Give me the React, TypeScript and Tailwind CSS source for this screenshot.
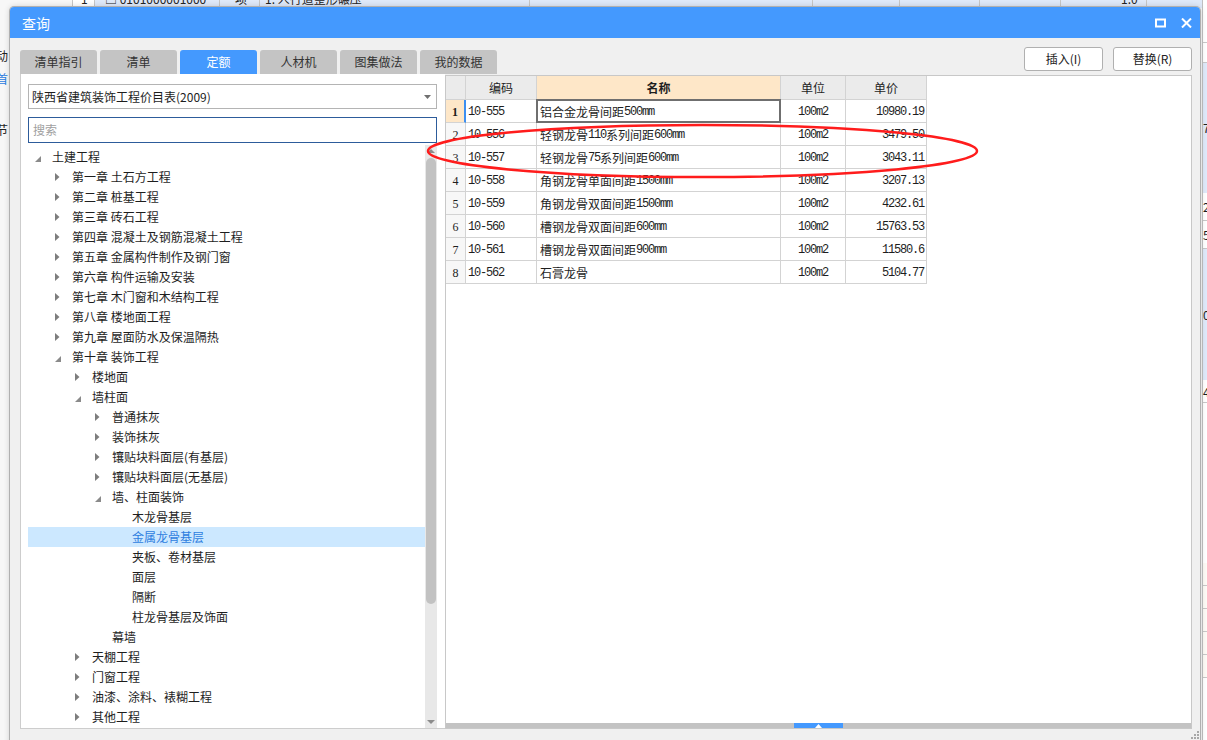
import React from "react";

type TNode = { t: string; l: number; s: "o" | "c" | "x"; sel?: boolean };

const tree: TNode[] = [
  { t: "土建工程", l: 0, s: "o" },
  { t: "第一章 土石方工程", l: 1, s: "c" },
  { t: "第二章 桩基工程", l: 1, s: "c" },
  { t: "第三章 砖石工程", l: 1, s: "c" },
  { t: "第四章 混凝土及钢筋混凝土工程", l: 1, s: "c" },
  { t: "第五章 金属构件制作及钢门窗", l: 1, s: "c" },
  { t: "第六章 构件运输及安装", l: 1, s: "c" },
  { t: "第七章 木门窗和木结构工程", l: 1, s: "c" },
  { t: "第八章 楼地面工程", l: 1, s: "c" },
  { t: "第九章 屋面防水及保温隔热", l: 1, s: "c" },
  { t: "第十章 装饰工程", l: 1, s: "o" },
  { t: "楼地面", l: 2, s: "c" },
  { t: "墙柱面", l: 2, s: "o" },
  { t: "普通抹灰", l: 3, s: "c" },
  { t: "装饰抹灰", l: 3, s: "c" },
  { t: "镶贴块料面层(有基层)", l: 3, s: "c" },
  { t: "镶贴块料面层(无基层)", l: 3, s: "c" },
  { t: "墙、柱面装饰", l: 3, s: "o" },
  { t: "木龙骨基层", l: 4, s: "x" },
  { t: "金属龙骨基层", l: 4, s: "x", sel: true },
  { t: "夹板、卷材基层", l: 4, s: "x" },
  { t: "面层", l: 4, s: "x" },
  { t: "隔断", l: 4, s: "x" },
  { t: "柱龙骨基层及饰面", l: 4, s: "x" },
  { t: "幕墙", l: 3, s: "x" },
  { t: "天棚工程", l: 2, s: "c" },
  { t: "门窗工程", l: 2, s: "c" },
  { t: "油漆、涂料、裱糊工程", l: 2, s: "c" },
  { t: "其他工程", l: 2, s: "c" },
];

const PL = ["pl-[8px]", "pl-[28px]", "pl-[48px]", "pl-[68px]", "pl-[88px]"];

const rows: string[][] = [
  ["1", "10-555", "铝合金龙骨间距500mm", "100m2", "10980.19"],
  ["2", "10-556", "轻钢龙骨110系列间距600mm", "100m2", "3479.50"],
  ["3", "10-557", "轻钢龙骨75系列间距600mm", "100m2", "3043.11"],
  ["4", "10-558", "角钢龙骨单面间距1500mm", "100m2", "3207.13"],
  ["5", "10-559", "角钢龙骨双面间距1500mm", "100m2", "4232.61"],
  ["6", "10-560", "槽钢龙骨双面间距600mm", "100m2", "15763.53"],
  ["7", "10-561", "槽钢龙骨双面间距900mm", "100m2", "11580.6"],
  ["8", "10-562", "石膏龙骨", "100m2", "5104.77"],
];

function Mixed({ s }: { s: string }) {
  const parts = s.match(/[\x00-\x7f]+|[^\x00-\x7f]+/g) || [];
  return (
    <>
      {parts.map((p, i) =>
        /^[\x00-\x7f]+$/.test(p) ? (
          <span key={i} className="font-['Liberation_Mono',monospace] tracking-[-1.2px]">
            {p}
          </span>
        ) : (
          <span key={i}>{p}</span>
        )
      )}
    </>
  );
}

function Background() {
  const topCells: { w: string; bg: string; txt?: string; pad?: string }[] = [
    { w: "w-[73px]", bg: "bg-[#f7f7f7]" },
    { w: "w-[22px]", bg: "bg-white", txt: "1", pad: "pl-[8px]" },
    { w: "w-[125px]", bg: "bg-[#dfe9f9]", txt: "□ 0101000001000", pad: "pl-[10px]" },
    { w: "w-[40px]", bg: "bg-[#dfe9f9]", txt: "项", pad: "pl-[15px]" },
    { w: "w-[270px]", bg: "bg-[#dfe9f9]", txt: "1. 人行道整形碾压", pad: "pl-[5px]" },
    { w: "w-[283px]", bg: "bg-[#dfe9f9]", txt: "", pad: "" },
    { w: "w-[87px]", bg: "bg-[#dfe9f9]", txt: "", pad: "" },
    { w: "w-[80px]", bg: "bg-[#dfe9f9]", txt: "", pad: "" },
    { w: "w-[81px]", bg: "bg-[#dfe9f9]", txt: "", pad: "" },
    { w: "w-[86px]", bg: "bg-[#dfe9f9]", txt: "1.0", pad: "pl-[60px]" },
    { w: "w-[60px]", bg: "bg-[#dfe9f9]", txt: "", pad: "" },
  ];
  return (
    <div className="absolute inset-0">
      <div className="flex h-[8px] overflow-hidden">
        {topCells.map((c, i) => (
          <div key={i} className={`${c.w} ${c.bg} ${c.pad ?? ""} shrink-0 h-[8px] border-r border-[#c6c6c6] overflow-hidden`}>
            <div className="-mt-[8px] leading-[14px] text-[12px] text-[#222] whitespace-nowrap">{c.txt}</div>
          </div>
        ))}
      </div>
      <div className="absolute left-[-4px] top-[49px] text-[12px] leading-[14px] text-[#222]">动</div>
      <div className="absolute left-[-4px] top-[72px] text-[12px] leading-[14px] text-[#2a7be0]">首</div>
      <div className="absolute left-[-4px] top-[123px] text-[12px] leading-[14px] text-[#222]">节</div>
      <div className="absolute left-[1202px] top-[0px] w-[5px] h-[740px] bg-white border-l border-[#c0c0c0]">
        <div className="h-[43px] border-b border-[#c8c8c8]" />
        <div className="h-[20px] border-b border-[#c8c8c8]" />
        <div className="h-[130px] bg-[#dfe9f9] text-[12px] leading-[130px] text-[#222]">7</div>
        <div className="h-[28px] border-b border-[#c8c8c8] text-[12px] leading-[28px]">2</div>
        <div className="h-[28px] border-b border-[#c8c8c8] text-[12px] leading-[28px]">5</div>
        <div className="h-[131px] bg-[#dfe9f9] text-[12px] leading-[131px]">0</div>
        <div className="h-[23px] border-b border-[#c8c8c8] text-[12px] leading-[23px]">4</div>
        <div className="h-[160px]" />
        <div className="h-[23px] border-b border-[#c8c8c8] bg-[#fdfaf5]" />
        <div className="h-[23px] border-b border-[#c8c8c8] bg-[#fdfaf5]" />
        <div className="h-[23px] border-b border-[#c8c8c8] bg-[#fdfaf5]" />
        <div className="h-[23px] border-b border-[#c8c8c8] bg-[#fdfaf5]" />
        <div className="h-[23px] border-b border-[#c8c8c8] bg-[#fdfaf5]" />
      </div>
    </div>
  );
}

function TitleBar() {
  return (
    <div className="h-[31px] shrink-0 bg-[#4499fe] rounded-t-[4px] flex items-center justify-between pl-[12px] pr-[8px]">
      <span className="text-white text-[14px] leading-[16px]">查询</span>
      <div className="flex items-center gap-[15px]">
        <svg width="11" height="10" viewBox="0 0 11 10">
          <rect x="1" y="1.5" width="9" height="7" fill="none" stroke="white" strokeWidth="2" />
        </svg>
        <svg width="11" height="10" viewBox="0 0 11 10">
          <path d="M1 0.5 L10 9.5 M10 0.5 L1 9.5" stroke="white" strokeWidth="2" />
        </svg>
      </div>
    </div>
  );
}

const tabs = ["清单指引", "清单", "定额", "人材机", "图集做法", "我的数据"];

function TabsRow() {
  return (
    <div className="h-[36px] shrink-0 flex justify-between pl-[10px] pr-[8px]">
      <div className="self-end flex gap-[3px]">
        {tabs.map((t) => (
          <div
            key={t}
            className={`w-[77px] h-[24px] rounded-t-[3px] flex items-center justify-center text-[12px] ${
              t === "定额" ? "bg-[#4499fe] text-white" : "bg-[#c4c4c4] text-[#333]"
            }`}
          >
            {t}
          </div>
        ))}
      </div>
      <div className="mt-[9px] flex gap-[10px]">
        <div className="w-[79px] h-[24px] rounded-[3px] border border-[#b0b0b0] bg-white flex items-center justify-center text-[12px] text-[#222]">
          插入(I)
        </div>
        <div className="w-[79px] h-[24px] rounded-[3px] border border-[#b0b0b0] bg-white flex items-center justify-center text-[12px] text-[#222]">
          替换(R)
        </div>
      </div>
    </div>
  );
}

function Arrow({ s }: { s: TNode["s"] }) {
  if (s === "c")
    return (
      <svg width="5" height="8" viewBox="0 0 5 8" className="-ml-[1px]">
        <polygon points="0,0 4.5,4 0,8" fill="#7d7d7d" />
      </svg>
    );
  if (s === "o")
    return (
      <svg width="6" height="6" viewBox="0 0 6 6" className="-ml-[1px] mt-[3px]">
        <polygon points="6,0 6,6 0,6" fill="#8a8a8a" />
      </svg>
    );
  return null;
}

function LeftPanel() {
  return (
    <div className="w-[425px] h-[655px] shrink-0 bg-white border-l border-b border-[#cdcdcd] flex flex-col overflow-hidden">
      <div className="ml-[7px] mt-[10px] w-[409px] h-[25px] border border-[#b4b4b4] bg-white flex items-center justify-between pl-[3px] pr-[5px]">
        <span className="text-[12px] text-[#1e1e1e]">陕西省建筑装饰工程价目表(2009)</span>
        <svg width="7" height="4" viewBox="0 0 7 4">
          <polygon points="0,0 7,0 3.5,4" fill="#707070" />
        </svg>
      </div>
      <div className="ml-[7px] mt-[8px] w-[409px] h-[26px] border border-[#2d5c9b] bg-white flex items-center pl-[4px]">
        <span className="text-[12px] text-[#a0a0a0]">搜索</span>
      </div>
      <div className="mt-[2px] h-[583px] flex">
        <div className="ml-[7px] w-[397px] pt-[2px] overflow-hidden">
          {tree.map((n, i) => (
            <div
              key={i}
              className={`h-[20px] flex items-center ${PL[n.l]} ${n.sel ? "bg-[#cce8ff] text-[#2e7ee0]" : "text-[#1e1e1e]"}`}
            >
              <div className="w-[16px] h-[20px] shrink-0 flex items-center">
                <Arrow s={n.s} />
              </div>
              <span className="text-[12px] leading-[20px] whitespace-nowrap">{n.t}</span>
            </div>
          ))}
        </div>
        <div className="w-[12px] h-[583px] bg-[#e8e8e8] flex flex-col items-center">
          <svg width="8" height="4" viewBox="0 0 8 4" className="mt-[4px]">
            <polygon points="0,4 8,4 4,0" fill="#8c8c8c" />
          </svg>
          <div className="mt-[5px] w-[10px] h-[446px] rounded-full bg-[#c2c2c2]" />
          <div className="flex-1" />
          <svg width="8" height="4" viewBox="0 0 8 4" className="mb-[4px]">
            <polygon points="0,0 8,0 4,4" fill="#8c8c8c" />
          </svg>
        </div>
      </div>
    </div>
  );
}

const colW = ["w-[20px]", "w-[71px]", "w-[244px]", "w-[65px]", "w-[81px]"];

function RightPanel() {
  return (
    <div className="mt-[1px] w-[747px] h-[654px] shrink-0 bg-white border border-[#c8c8c8] flex flex-col">
      <div className="flex h-[24px] text-[12px] text-[#1e1e1e]">
        <div className={`${colW[0]} bg-[#ebebeb] border-r border-b border-[#d3d3d3]`} />
        <div className={`${colW[1]} bg-[#ebebeb] border-r border-b border-[#d3d3d3] flex items-center justify-center`}>编码</div>
        <div className={`${colW[2]} bg-[#fee7c8] border-r border-b border-[#d3d3d3] flex items-center justify-center font-bold`}>名称</div>
        <div className={`${colW[3]} bg-[#ebebeb] border-r border-b border-[#d3d3d3] flex items-center justify-center`}>单位</div>
        <div className={`${colW[4]} bg-[#ebebeb] border-r border-b border-[#d3d3d3] flex items-center justify-center`}>单价</div>
      </div>
      {rows.map((r, i) => {
        const sel = i === 0;
        return (
          <div key={i} className="flex h-[23px] text-[12px] text-[#1e1e1e]">
            <div
              className={`${colW[0]} border-b flex items-center justify-center pt-[2px] font-['Liberation_Serif',serif] ${
                sel ? "bg-[#fee7c8] border-r-2 border-r-[#3d8ff0] border-b-[#d3d3d3] font-bold" : "bg-[#f7f7f7] border-r border-[#d3d3d3]"
              }`}
            >
              {r[0]}
            </div>
            <div className={`${colW[1]} border-r border-b border-[#d3d3d3] flex items-center pt-[2px] pl-[2px] whitespace-nowrap`}>
              <Mixed s={r[1]} />
            </div>
            <div className={`${colW[2]} relative border-r border-b border-[#d3d3d3] flex items-center pt-[2px] pl-[3px] whitespace-nowrap`}>
              <Mixed s={r[2]} />
              {sel && <div className="absolute inset-[-1px] border-2 border-[#6f6f6f]" />}
            </div>
            <div className={`${colW[3]} border-r border-b border-[#d3d3d3] flex items-center justify-center pt-[2px] whitespace-nowrap`}>
              <Mixed s={r[3]} />
            </div>
            <div className={`${colW[4]} border-r border-b border-[#d3d3d3] flex items-center justify-end pt-[2px] pr-[2px] whitespace-nowrap`}>
              <Mixed s={r[4]} />
            </div>
          </div>
        );
      })}
      <div className="flex-1" />
      <div className="h-[5px] bg-[#c3c3c3] flex justify-center">
        <div className="w-[49px] h-[5px] bg-[#4499fe] flex items-center justify-center">
          <svg width="7" height="4" viewBox="0 0 7 4">
            <polygon points="0,4 7,4 3.5,0" fill="white" />
          </svg>
        </div>
      </div>
    </div>
  );
}

export default function App() {
  return (
    <div className="relative w-[1207px] h-[740px] overflow-hidden bg-[#f7f7f7] font-['Noto_Sans_CJK_SC','Noto_Sans',sans-serif] text-[12px] text-[#1e1e1e]">
      <Background />
      <div className="absolute left-[10px] top-[7px] w-[1190px] h-[760px] flex flex-col bg-[#f0f0f0] rounded-t-[4px] shadow-[0_0_0_1px_#b0b0b0,0_0_6px_rgba(0,0,0,0.2)]">
        <TitleBar />
        <TabsRow />
        <div className="flex pl-[10px]">
          <LeftPanel />
          <RightPanel />
        </div>
        <svg width="9" height="9" viewBox="0 0 9 9" className="absolute left-[1180px] top-[723px]">
          <rect x="7" y="1" width="2" height="2" fill="#a8a8a8" />
          <rect x="4" y="4" width="2" height="2" fill="#a8a8a8" />
          <rect x="7" y="4" width="2" height="2" fill="#a8a8a8" />
          <rect x="1" y="7" width="2" height="2" fill="#a8a8a8" />
          <rect x="4" y="7" width="2" height="2" fill="#a8a8a8" />
          <rect x="7" y="7" width="2" height="2" fill="#a8a8a8" />
        </svg>
      </div>
      <svg width="560" height="62" viewBox="0 0 560 62" className="absolute left-[425px] top-[120px] pointer-events-none">
        <ellipse cx="277.5" cy="31" rx="274.5" ry="26" fill="none" stroke="#ff1c1c" strokeWidth="2.5" />
      </svg>
    </div>
  );
}
